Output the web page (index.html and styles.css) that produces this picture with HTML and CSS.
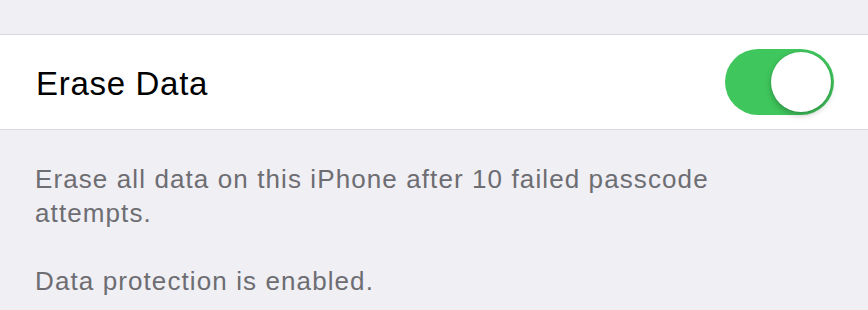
FILE: index.html
```html
<!DOCTYPE html>
<html lang="en">
<head>
  <meta charset="UTF-8" />
  <title>Passcode Settings</title>
  <link rel="stylesheet" href="styles.css">
</head>
<body>
  <div class="group">
    <div class="cell">
      <span class="label">Erase Data</span>
      <label class="switch on">
        <span class="knob"></span>
      </label>
    </div>
  </div>
  <div class="footer">
    <p>Erase all data on this iPhone after 10 failed passcode attempts.</p>
    <p>Data protection is enabled.</p>
  </div>
</body>
</html>
```

FILE: styles.css
```css
body {
  margin: 0;
  background: #efeff4;
  font-family: "Liberation Sans", Arial, sans-serif;
  width: 868px;
  height: 310px;
  overflow: hidden;
}
.group {
  margin-top: 34px;
  background: #fff;
  border-top: 1px solid #d9d8dd;
  border-bottom: 1px solid #d9d8dd;
}
.cell {
  height: 94px;
  display: flex;
  align-items: center;
  justify-content: space-between;
  padding: 0 34px 0 36px;
}
.label {
  font-size: 33px;
  letter-spacing: 0.7px;
  color: #000;
  margin-top: 4px;
}
.switch {
  width: 109px;
  height: 66px;
  border-radius: 33px;
  background: #3fc65c;
  display: flex;
  align-items: center;
  justify-content: flex-end;
  padding: 0 3px;
  box-sizing: border-box;
}
.knob {
  width: 60px;
  height: 60px;
  border-radius: 50%;
  background: #fff;
  box-shadow: 0 3px 6px rgba(0, 0, 0, 0.25), 0 0 0 1px rgba(0, 0, 0, 0.04);
}
.footer {
  padding: 0 36px 0 35px;
  color: #6d6d72;
  font-size: 26px;
  letter-spacing: 1.1px;
  line-height: 34px;
}
.footer p {
  margin: 0;
  max-width: 720px;
}
.footer p:first-child {
  margin-top: 32px;
}
.footer p + p {
  margin-top: 34px;
}
```
